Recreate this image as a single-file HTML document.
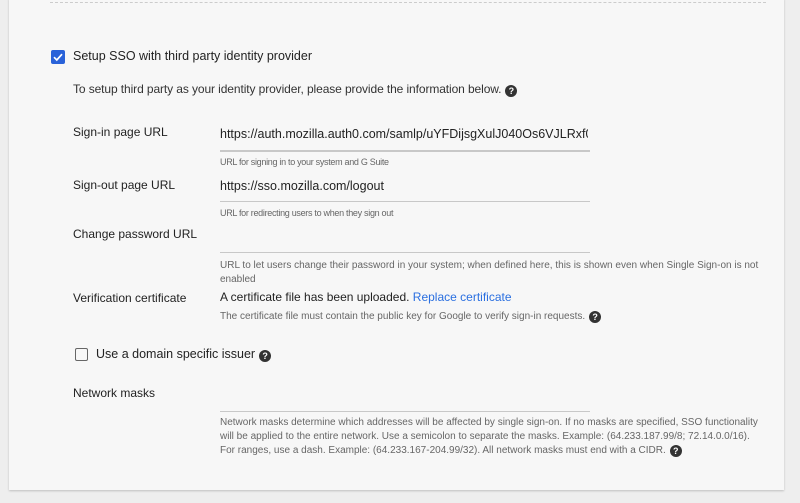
<!DOCTYPE html>
<html><head><style>
*{margin:0;padding:0;box-sizing:border-box}
body{width:800px;height:503px;background:#eeeeee;font-family:"Liberation Sans",Arial,sans-serif;position:relative;overflow:hidden;color:#212121}
.panel{position:absolute;left:9px;top:-2px;width:775px;height:492px;background:#f7f7f7;box-shadow:0 1px 2px rgba(0,0,0,.2)}
.a{position:absolute;white-space:nowrap}
.lbl{font-size:12px;color:#222}
.val{font-size:12.5px;color:#222}
.help{font-size:10px;color:#666}
.line{position:absolute;left:220px;width:370px;height:1px;background:#c8c8c8}
.q{display:inline-block;width:12px;height:12px;border-radius:50%;background:#333;color:#fff;font-size:9px;font-weight:bold;text-align:center;line-height:12px;vertical-align:-1px;margin-left:4px;letter-spacing:0}
</style></head><body>
<div class="panel"></div>
<div class="a" style="left:50px;top:2px;width:716px;border-top:1px dashed #ccc"></div>
<div class="a" style="left:51px;top:50px;width:14px;height:14px;background:#2962d9;border-radius:2px"><svg width="14" height="14"><path d="M3 7.2 L5.8 10 L11 4.2" stroke="#fff" stroke-width="1.7" fill="none"/></svg></div>
<div class="a lbl" style="left:73px;top:49px;font-size:12.5px">Setup SSO with third party identity provider</div>
<div class="a lbl" style="left:73px;top:82px;color:#333;letter-spacing:-0.1px">To setup third party as your identity provider, please provide the information below.<span class="q">?</span></div>
<div class="a lbl" style="left:73px;top:125px">Sign-in page URL</div>
<div class="a val" style="left:220px;top:127px;width:368px;overflow:hidden">https://auth.mozilla.auth0.com/samlp/uYFDijsgXulJ040Os6VJLRxf0G</div>
<div class="line" style="top:150px;height:2px"></div>
<div class="a help" style="left:220px;top:157px;font-size:9px;letter-spacing:-0.3px">URL for signing in to your system and G Suite</div>
<div class="a lbl" style="left:73px;top:178px">Sign-out page URL</div>
<div class="a val" style="left:220px;top:179px">https://sso.mozilla.com/logout</div>
<div class="line" style="top:201px"></div>
<div class="a help" style="left:220px;top:208px;font-size:9px;letter-spacing:-0.3px">URL for redirecting users to when they sign out</div>
<div class="a lbl" style="left:73px;top:227px">Change password URL</div>
<div class="line" style="top:252px"></div>
<div class="a help" style="left:220px;top:259px;line-height:14px">URL to let users change their password in your system; when defined here, this is shown even when Single Sign-on is not<br>enabled</div>
<div class="a lbl" style="left:73px;top:291px">Verification certificate</div>
<div class="a val" style="left:220px;top:290px;font-size:12px">A certificate file has been uploaded. <span style="color:#2a6fe0">Replace certificate</span></div>
<div class="a help" style="left:220px;top:311px">The certificate file must contain the public key for Google to verify sign-in requests.<span class="q">?</span></div>
<div class="a" style="left:75px;top:348px;width:13px;height:13px;border:1.5px solid #666;border-radius:2px"></div>
<div class="a lbl" style="left:96px;top:347px;font-size:12.5px">Use a domain specific issuer<span class="q">?</span></div>
<div class="a lbl" style="left:73px;top:386px">Network masks</div>
<div class="line" style="top:411px"></div>
<div class="a help" style="left:220px;top:416px;line-height:14px">Network masks determine which addresses will be affected by single sign-on. If no masks are specified, SSO functionality<br>will be applied to the entire network. Use a semicolon to separate the masks. Example: (64.233.187.99/8; 72.14.0.0/16).<br>For ranges, use a dash. Example: (64.233.167-204.99/32). All network masks must end with a CIDR.<span class="q">?</span></div>
</body></html>
